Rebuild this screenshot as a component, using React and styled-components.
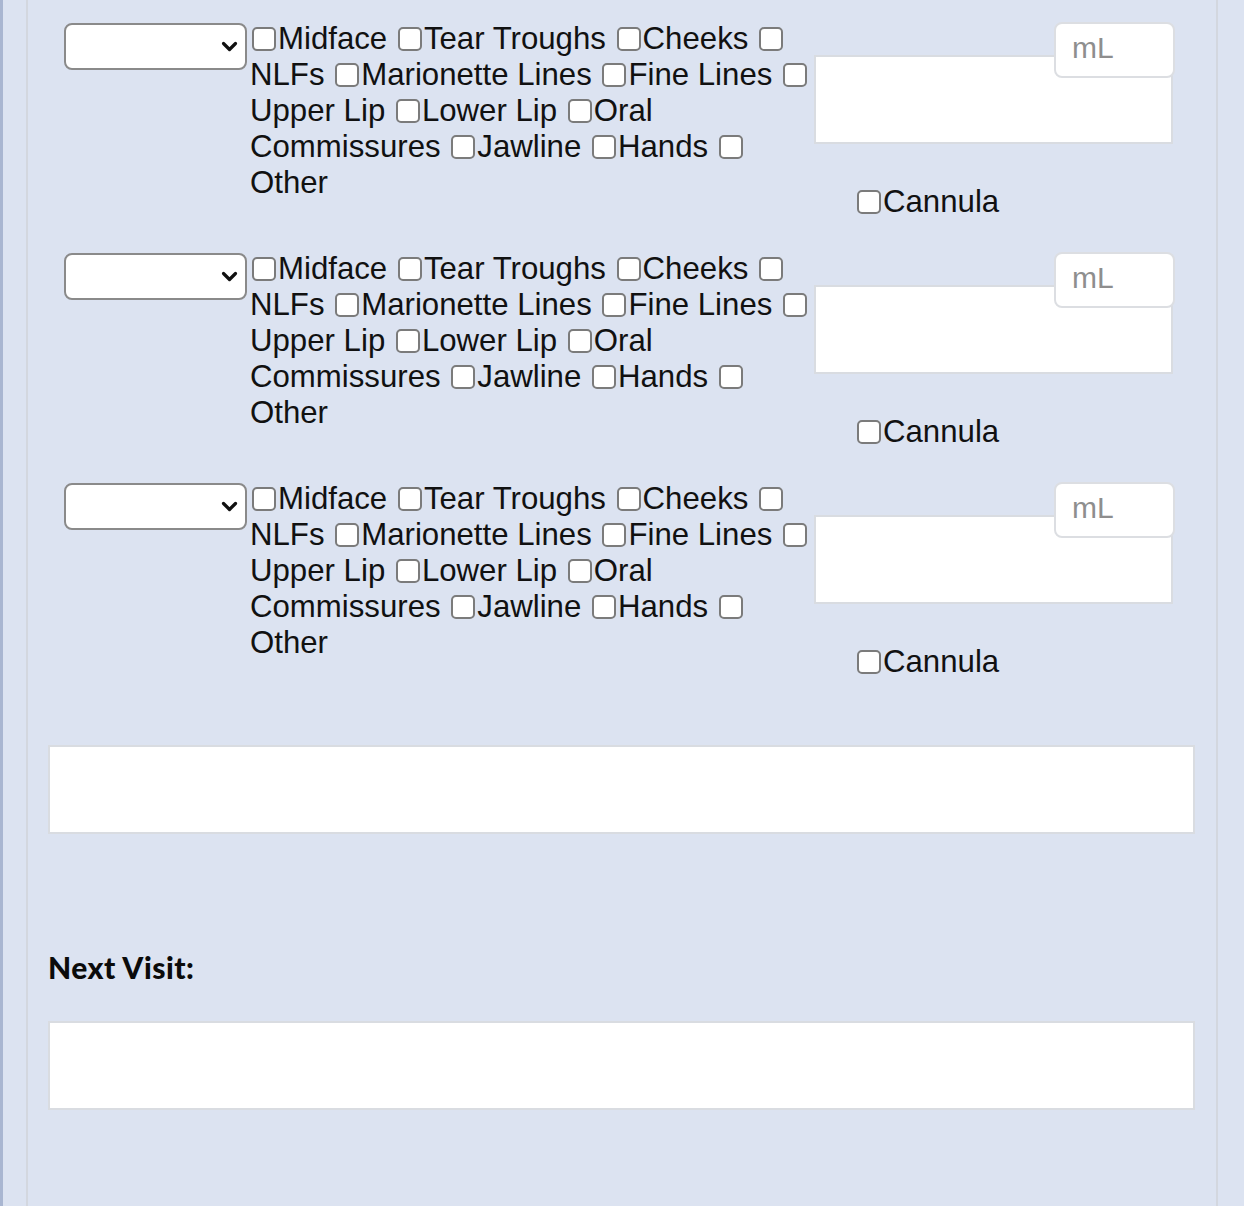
import React from "react";
import styled, { createGlobalStyle } from "styled-components";

const areas = [
  "Midface",
  "Tear Troughs",
  "Cheeks",
  "NLFs",
  "Marionette Lines",
  "Fine Lines",
  "Upper Lip",
  "Lower Lip",
  "Oral Commissures",
  "Jawline",
  "Hands",
  "Other",
];

const GlobalStyle = createGlobalStyle`
  body {
    margin: 0;
    background: #dce3f1;
  }
`;

const Chevron = () => (
  <svg width="17" height="11" viewBox="0 0 17 11">
    <path
      d="M2.5 2.5 L8.5 8.5 L14.5 2.5"
      fill="none"
      stroke="#111"
      strokeWidth="3.2"
      strokeLinecap="round"
      strokeLinejoin="round"
    />
  </svg>
);

const TreatmentRow = () => {
  return (
    <Row>
      <SelectWrap>
        <Select defaultValue="">
          <option value=""></option>
        </Select>
        <span className="chevron">
          <Chevron />
        </span>
      </SelectWrap>
      <Areas>
        {areas.map((label, index) => (
          <React.Fragment key={label}>
            <Check type="checkbox" />
            {label}
            {index < areas.length - 1 ? " " : ""}
          </React.Fragment>
        ))}
      </Areas>
      <Product>
        <Box height={89} />
        <Amount placeholder="mL" />
        <Cannula>
          <Check type="checkbox" />
          Cannula
        </Cannula>
      </Product>
    </Row>
  );
};

const App = () => {
  return (
    <Page>
      <GlobalStyle />
      <Panel>
        <Rows>
          <TreatmentRow />
          <TreatmentRow />
          <TreatmentRow />
        </Rows>
        <Notes />
        <Label>Next Visit:</Label>
        <Notes className="next" />
      </Panel>
    </Page>
  );
};

const Page = styled.div`
  min-height: 1206px;
  box-sizing: border-box;
  border-left: 3px solid #a9b6d1;
  padding: 0 26px 0 23px;
  display: flex;
  font-family: "Liberation Sans", Arial, sans-serif;
  color: #111;
`;

const Panel = styled.div`
  flex: 1;
  border-left: 2px solid #d3d7df;
  border-right: 2px solid #d3d7df;
  padding: 22px 20px 0 20px;
`;

const Rows = styled.div`
  display: flex;
  flex-direction: column;
  gap: 32px;
`;

const Row = styled.div`
  display: flex;
  align-items: flex-start;
  height: 198px;
`;

const SelectWrap = styled.div`
  position: relative;
  margin: 1px 3px 0 16px;
  width: 183px;
  height: 47px;
  flex-shrink: 0;

  .chevron {
    position: absolute;
    right: 9px;
    top: 18px;
    pointer-events: none;
    line-height: 0;
  }
`;

const Select = styled.select`
  appearance: none;
  width: 100%;
  height: 100%;
  box-sizing: border-box;
  background: #fff;
  border: 2px solid #8a8a8a;
  border-radius: 8px;
  font-size: 28px;
`;

const Areas = styled.div`
  width: 564px;
  flex-shrink: 0;
  margin-top: -1px;
  font-size: 31.2px;
  line-height: 36px;
`;

const Check = styled.input`
  appearance: none;
  box-sizing: border-box;
  width: 24px;
  height: 24px;
  margin: 0 2px 0 2px;
  border: 2px solid #7b7b7b;
  border-radius: 5px;
  background: #fff;
  vertical-align: -2px;
`;

const Product = styled.div`
  position: relative;
  width: 361px;
  flex-shrink: 0;
`;

const Box = styled.div`
  box-sizing: border-box;
  width: 359px;
  height: ${(p) => p.height}px;
  margin-top: 33px;
  background: #fff;
  border: 2px solid #d9dce1;
`;

const Amount = styled.input`
  position: absolute;
  top: 0;
  right: 0;
  box-sizing: border-box;
  width: 121px;
  height: 56px;
  padding: 0 0 4px 16px;
  background: #fff;
  border: 2px solid #dcdee2;
  border-radius: 8px;
  font-family: "Liberation Sans", Arial, sans-serif;
  font-size: 30px;
  outline: none;

  &::placeholder {
    color: #8e8e8e;
  }
`;

const Cannula = styled.div`
  margin-top: 40px;
  padding-left: 41px;
  font-size: 31.2px;
  line-height: 36px;
`;

const Notes = styled.div`
  box-sizing: border-box;
  height: 89px;
  margin-top: 65px;
  width: 1147px;
  background: #fff;
  border: 2px solid #d9dce1;

  &.next {
    margin-top: 37px;
  }
`;

const Label = styled.div`
  margin-top: 116px;
  font-family: Lato, "Open Sans", sans-serif;
  font-weight: 900;
  font-size: 30px;
  line-height: 34px;
  letter-spacing: 0.5px;
  color: #0b0b0b;
`;

export default App;
